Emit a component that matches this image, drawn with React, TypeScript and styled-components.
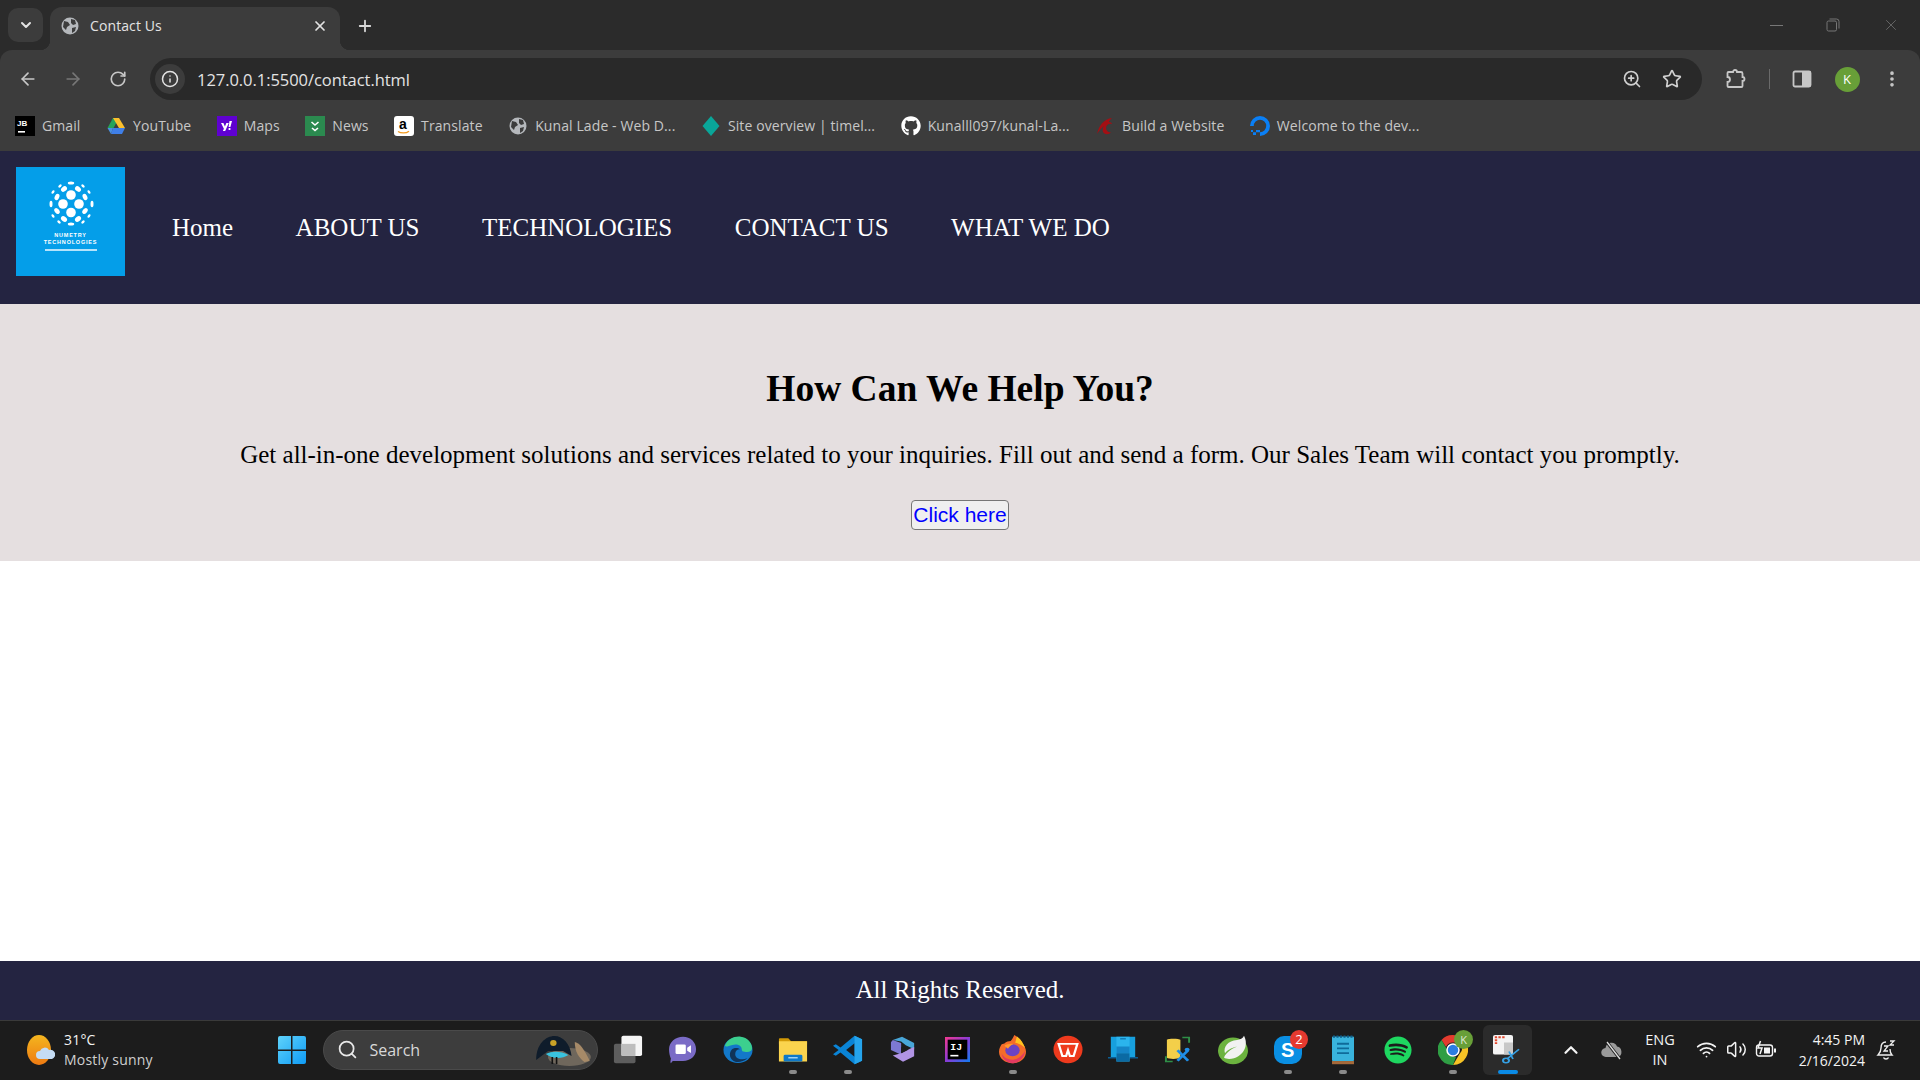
import React from 'react';
import styled, { createGlobalStyle } from 'styled-components';
import {
  ArrowLeft,
  ArrowRight,
  ChevronDown,
  ChevronUp,
  Info,
  MoreVertical,
  Plus,
  RotateCw,
  Search,
  Star,
  Volume2,
  Wifi,
  X,
  ZoomIn,
} from 'lucide-react';
import { FaGithub, FaSpotify } from 'react-icons/fa';

const GlobalStyle = createGlobalStyle`
  html, body {
    margin: 0;
    padding: 0;
    background: #fff;
  }
`;

const NAVY = '#242441';

const SkypeBadge = styled.span`
  position: absolute;
  top: 5px;
  right: 7px;
  width: 18px;
  height: 19px;
  display: flex;
  align-items: center;
  justify-content: center;
  border-radius: 50%;
  background: #e5392f;
  color: #fff;
  font-size: 13px;
`;

const ChromeBadge = styled.span`
  position: absolute;
  top: 5px;
  right: 7px;
  width: 19px;
  height: 19px;
  display: flex;
  align-items: center;
  justify-content: center;
  border-radius: 50%;
  background: #689f38;
  color: #dfe8d2;
  font-size: 11px;
`;

const GlobeFavicon = () => (
  <svg width="18" height="18" viewBox="0 0 18 18">
    <circle cx="9" cy="9" r="8.5" fill="#b5b8bc" />
    <path d="M3 4l4 1 2 3-3 2-1 3-3-3zM10 2l4 1 1 4-3 1-2-2zM11 11l4-1-1 4-3 2z" fill="#3c3c3c" />
  </svg>
);

const JbIcon = () => (
  <svg width="20" height="20" viewBox="0 0 20 20">
    <rect width="20" height="20" fill="#000" />
    <text x="2" y="10" fill="#fff" fontSize="8" fontWeight="700" fontFamily="Liberation Sans">JB</text>
    <rect x="3" y="15" width="7" height="1.6" fill="#fff" />
  </svg>
);

const DriveIcon = () => (
  <svg width="20" height="20" viewBox="0 0 20 20">
    <path d="M7 2h6l-5.5 10H1.5z" fill="#25a35a" />
    <path d="M7 2h6l6 10h-6z" fill="#fbc02d" />
    <path d="M7 12h12l-3 6H5z" fill="#3f7fe8" />
    <path d="M1.5 12H7l-2 6z" fill="#4a90e2" />
  </svg>
);

const YahooIcon = () => (
  <svg width="20" height="20" viewBox="0 0 20 20">
    <rect width="20" height="20" fill="#5f01d1" />
    <path d="M4 7h2.400l1.500 3.500L9.400 7h2.400l-3.600 8H5.900l1-2.300zM12.500 5h2.500l-1.600 6h-1.800zM11.600 12h1.800v2h-1.800z" fill="#fff" />
  </svg>
);

const NewsIcon = () => (
  <svg width="20" height="20" viewBox="0 0 20 20">
    <rect width="20" height="20" fill="#2b8a4f" />
    <path d="M6.500 6l3.500 3 3.500-3M7 12l3 2.500 3-2.500" stroke="#fff" strokeWidth="1.6" fill="none" />
  </svg>
);

const AmazonIcon = () => (
  <svg width="20" height="20" viewBox="0 0 20 20">
    <rect width="20" height="20" rx="3" fill="#fff" />
    <text x="5" y="13" fill="#000" fontSize="14" fontWeight="700" fontFamily="Liberation Sans">a</text>
    <path d="M4 15.500c3 2 8 2 11-.3" stroke="#f29a1f" strokeWidth="1.3" fill="none" />
  </svg>
);

const DiamondIcon = () => (
  <svg width="20" height="20" viewBox="0 0 20 20">
    <path d="M10 0l8.500 10L10 20 1.500 10z" fill="#0aa699" />
  </svg>
);

const RedBirdIcon = () => (
  <svg width="20" height="20" viewBox="0 0 20 20">
    <path d="M2 18C4 9 9 3 17 2c-2 2-3 3-3 4 2 0 3 1 3 2-3-1-6 1-6 4 0 3 3 5 5 4-2 3-6 3-8 0-1-2 0-5 1-6-3 2-5 5-7 8z" fill="#a30f14" />
  </svg>
);

const OceanIcon = () => (
  <svg width="20" height="20" viewBox="0 0 20 20">
    <path d="M10 20v-3.800a6.200 6.200 0 1 0-6.200-6.200H0A10 10 0 1 1 10 20z" fill="#0a7ff5" />
    <path d="M6 14h4v2.200H6zM3 16.200h3V19H3zM1 14h2v2H1z" fill="#0a7ff5" />
  </svg>
);

const LogoMark = () => (
  <svg width="56" height="56" viewBox="-28 -28 56 56">
    <g fill="#fff">
      <circle cx="0" cy="-9" r="4.8" />
      <circle cx="-8" cy="0" r="4.8" />
      <circle cx="8" cy="0" r="4.8" />
      <circle cx="0" cy="8.5" r="4.8" />
      <ellipse cx="-7" cy="-15" rx="2.4" ry="3.3" transform="rotate(50 -7 -15)" />
      <ellipse cx="7" cy="-15" rx="2.4" ry="3.3" transform="rotate(-50 7 -15)" />
      <ellipse cx="-14" cy="-7" rx="2.2" ry="3.3" transform="rotate(25 -14 -7)" />
      <ellipse cx="14" cy="-7" rx="2.2" ry="3.3" transform="rotate(-25 14 -7)" />
      <ellipse cx="-14" cy="7" rx="2.2" ry="3.3" transform="rotate(-40 -14 7)" />
      <ellipse cx="14" cy="7" rx="2.2" ry="3.3" transform="rotate(40 14 7)" />
      <ellipse cx="-7" cy="15" rx="2.4" ry="3.3" transform="rotate(-55 -7 15)" />
      <ellipse cx="7" cy="15" rx="2.4" ry="3.3" transform="rotate(55 7 15)" />
      <ellipse cx="0" cy="-21" rx="3.2" ry="1.5" />
      <ellipse cx="0" cy="20" rx="3.2" ry="1.5" />
      <ellipse cx="-20" cy="0" rx="1.5" ry="3.2" />
      <ellipse cx="21" cy="0" rx="1.5" ry="3.2" />
      <ellipse cx="-11" cy="-18" rx="2" ry="1.2" transform="rotate(-40 -11 -18)" />
      <ellipse cx="12" cy="-18" rx="2" ry="1.2" transform="rotate(40 12 -18)" />
      <ellipse cx="-18" cy="-12" rx="1.2" ry="2" transform="rotate(35 -18 -12)" />
      <ellipse cx="18" cy="-12" rx="1.2" ry="2" transform="rotate(-35 18 -12)" />
      <ellipse cx="-18" cy="12" rx="1.2" ry="2" transform="rotate(-35 -18 12)" />
      <ellipse cx="18" cy="12" rx="1.2" ry="2" transform="rotate(35 18 12)" />
      <ellipse cx="-12" cy="18" rx="2" ry="1.2" transform="rotate(40 -12 18)" />
      <ellipse cx="12" cy="18" rx="2" ry="1.2" transform="rotate(-40 12 18)" />
    </g>
  </svg>
);

const ExtensionsIcon = () => (
  <svg width="22" height="22" viewBox="0 0 22 22" fill="none" stroke="#c7c7c7" strokeWidth="1.8">
    <path d="M4.500 4H9a2 2 0 0 1 4 0h4a1.500 1.500 0 0 1 1.500 1.500V9a2 2 0 0 1 0 4v5a1 1 0 0 1-1 1h-13a1 1 0 0 1-1-1v-4a2.500 2.500 0 0 0 0-5V5a1 1 0 0 1 1-1z" />
  </svg>
);

const SidePanelIcon = () => (
  <svg width="20" height="20" viewBox="0 0 20 20">
    <rect x="1.5" y="2.5" width="17" height="15" rx="1.5" fill="none" stroke="#c7c7c7" strokeWidth="1.8" />
    <rect x="10" y="2.5" width="8.5" height="15" fill="#c7c7c7" />
  </svg>
);

const RestoreIcon = () => (
  <svg width="14" height="14" viewBox="0 0 14 14" fill="none" stroke="#777" strokeWidth="1">
    <rect x="1" y="3" width="9.5" height="10" rx="1.5" />
    <path d="M3.500 1h7A2.500 2.500 0 0 1 13 3.500v7" />
  </svg>
);

const WeatherIcon = () => (
  <svg width="28" height="30" viewBox="0 0 28 30">
    <defs>
      <linearGradient id="sun" x1="0" y1="0" x2="0" y2="1">
        <stop offset="0" stopColor="#f4b61f" />
        <stop offset="1" stopColor="#ee7a12" />
      </linearGradient>
    </defs>
    <ellipse cx="12" cy="15" rx="12" ry="15" fill="url(#sun)" />
    <path d="M13 24a4 4 0 0 1 0-8 5 5 0 0 1 9-1 4.500 4.500 0 0 1 3 9z" fill="#c5dcf4" />
  </svg>
);

const WindowsIcon = () => (
  <svg width="30" height="30" viewBox="0 0 30 30">
    <defs>
      <linearGradient id="win" x1="0" y1="0" x2="1" y2="1">
        <stop offset="0" stopColor="#5fd3fb" />
        <stop offset="1" stopColor="#0f9bf5" />
      </linearGradient>
    </defs>
    <path d="M1 3a2 2 0 0 1 2-2h11v13.500H1zM15.500 1H27a2 2 0 0 1 2 2v11.500H15.500zM1 16h13v13H3a2 2 0 0 1-2-2zM15.500 16H29v11a2 2 0 0 1-2 2H15.500z" fill="url(#win)" />
  </svg>
);

const SearchArt = () => (
  <svg width="60" height="32" viewBox="0 0 56 32" preserveAspectRatio="none">
    <ellipse cx="34" cy="23" rx="20" ry="9" fill="#6f675c" />
    <path d="M3 26C3 10 12 2 20 2s15 8 16 20l-8-5H14z" fill="#0f1c2b" />
    <path d="M12 20c6-3 14-3 21 1-6 4-15 4-21-1z" fill="#39c3df" />
    <circle cx="19" cy="9" r="3" fill="#c9a227" />
    <path d="M18 23v7M22 23v7" stroke="#111" strokeWidth="1.5" />
    <path d="M39 8c5 1 9 8 14 19l-5 1c-5-4-9-10-9-20z" fill="#a68a68" />
  </svg>
);

const TaskViewIcon = () => (
  <svg width="30" height="29" viewBox="0 0 32 36" preserveAspectRatio="none">
    <rect x="1" y="11" width="23" height="24" rx="2" fill="#5d5d5d" />
    <rect x="9" y="1" width="22" height="25" rx="2" fill="#f5f5f5" />
    <rect x="9" y="11" width="15" height="15" fill="#bdbdbd" />
  </svg>
);

const TeamsIcon = () => (
  <svg width="28" height="28" viewBox="0 0 30 36" preserveAspectRatio="none">
    <path d="M15 1c8 0 14 7 14 16s-6 15-14 15H4l-2 3c-1-1 0-4 0-6-1-3-2-7-2-12C0 8 7 1 15 1z" fill="#7a6bc6" />
    <rect x="7" y="11" width="11" height="12" rx="1.5" fill="#fff" />
    <path d="M19.500 15l4-3v10l-4-3z" fill="#fff" />
  </svg>
);

const EdgeIcon = () => (
  <svg width="30" height="30" viewBox="0 0 32 36" preserveAspectRatio="none">
    <circle cx="16" cy="18" r="15.5" fill="#1378c9" />
    <path d="M2 13C5 4 13 1 19 2c7 1 12 7 12 14 0 4-4 5-8 4-2 0-3-1-3-3 0-4-5-7-10-5-4 1-7 3-8 1z" fill="#3ccf8e" />
    <path d="M13 32c-6-2-7-10-4-14 2-3 7-3 9-1-3 0-5 2-5 6 0 5 6 8 13 5-4 4-9 5-13 4z" fill="#101d33" opacity=".75" />
  </svg>
);

const FolderIcon = () => (
  <svg width="30" height="27" viewBox="0 0 32 36" preserveAspectRatio="none">
    <path d="M1 4a1 1 0 0 1 1-1h9l3 4h17v4H1z" fill="#d39a06" />
    <rect x="1" y="7" width="30" height="27" fill="#fbd44e" />
    <rect x="6" y="25" width="20" height="9" rx="1.5" fill="#0f79c9" />
    <rect x="11" y="28" width="10" height="2" fill="#9ed2f4" />
  </svg>
);

const VsCodeIcon = () => (
  <svg width="30" height="30" viewBox="0 0 32 36" preserveAspectRatio="none">
    <path d="M23 1l8 4v26l-8 4L8 21l-5 4-3-2 6-5-6-5 3-2 5 4z" fill="#0a84d6" />
    <path d="M23 10v16l-9-8z" fill="#1c1c1c" />
    <path d="M23 1l8 4v26l-8 4z" fill="#25a4ec" />
  </svg>
);

const CopilotIcon = () => (
  <svg width="26" height="28" viewBox="0 0 28 36" preserveAspectRatio="none">
    <path d="M3 5l10-4 13 8v8l-9-5-5-5z" fill="#48a6d8" />
    <path d="M3 5l9 4v15L1 18V8z" fill="#7d79d2" />
    <path d="M26 14v12l-12 7-11-8 10-3 9-6z" fill="#b194e4" />
    <path d="M12 14l7 4-7 4z" fill="#1c1c1c" />
  </svg>
);

const IntellijIcon = () => (
  <svg width="25" height="25" viewBox="0 0 28 28">
    <defs>
      <linearGradient id="ij" x1="0" y1="0" x2="1" y2="1">
        <stop offset="0" stopColor="#f5398f" />
        <stop offset=".5" stopColor="#8a3bd6" />
        <stop offset="1" stopColor="#0e7cf2" />
      </linearGradient>
    </defs>
    <rect width="28" height="28" fill="url(#ij)" />
    <rect x="3" y="3" width="22" height="22" fill="#000" />
    <text x="6" y="15" fill="#fff" fontSize="11" fontWeight="700" fontFamily="Liberation Mono">IJ</text>
    <rect x="6" y="20" width="9" height="1.8" fill="#fff" />
  </svg>
);

const FirefoxIcon = () => (
  <svg width="27" height="29" viewBox="0 0 30 38" preserveAspectRatio="none">
    <path d="M17 0c6 4 8 8 8 10 3 3 5 7 5 12 0 9-7 15-15 15S0 31 0 22c0-5 2-8 3-10l3-1c2-2 5-3 7-3 2-3 3-5 4-8z" fill="#f46c2a" />
    <path d="M20 2c5 4 7 9 9 15-3-3-7-6-11-7 1-3 1-6 2-8z" fill="#ffc21f" />
    <path d="M3 24c2 8 17 15 26-3-1 10-8 16-14 16S3 31 3 24z" fill="#e23a62" />
    <circle cx="15" cy="20" r="8" fill="#6b43c4" />
    <path d="M6 14c3-2 7-3 10-2-3 1-5 4-6 6z" fill="#ff9a2c" />
  </svg>
);

const WpsIcon = () => (
  <svg width="30" height="29" viewBox="0 0 32 36" preserveAspectRatio="none">
    <ellipse cx="16" cy="18" rx="15.5" ry="17" fill="#ee3a1d" />
    <path d="M6 11h20l-4 15h-4l-2-7-2 7h-4z" fill="none" stroke="#fff" strokeWidth="2.4" />
  </svg>
);

const PhoneLinkIcon = () => (
  <svg width="30" height="27" viewBox="0 0 32 36" preserveAspectRatio="none">
    <rect x="3" y="1" width="26" height="27" fill="#17a0de" />
    <path d="M0 28h32v2H0z" fill="#0b5e94" />
    <rect x="9" y="1" width="14" height="33" fill="#2bb4ed" />
    <rect x="9" y="14" width="14" height="9" fill="#1585c7" />
    <rect x="9" y="23" width="14" height="11" fill="#0b6aa3" />
    <rect x="13" y="3" width="6" height="1.5" fill="#0b6aa3" />
  </svg>
);

const DbToolIcon = () => (
  <svg width="27" height="27" viewBox="0 0 28 36" preserveAspectRatio="none">
    <path d="M3 5c0-2 13-2 14 0v24c-3 2-12 2-14 0z" fill="#f3cf4a" />
    <path d="M19 2h7v7M2 27v7h7" fill="none" stroke="#2f8f47" strokeWidth="2" />
    <path d="M14 19l11 14M25 19L14 33" stroke="#1f8ee6" strokeWidth="3" />
    <circle cx="24" cy="18" r="2.5" fill="#1f8ee6" />
  </svg>
);

const SpringIcon = () => (
  <svg width="30" height="30" viewBox="0 0 30 36" preserveAspectRatio="none">
    <ellipse cx="15" cy="19" rx="15" ry="16" fill="#6cb33f" />
    <path d="M26 1c4 9 2 22-10 27-4 1-8 1-10-1 2-6 9-12 16-14-7 2-12 4-15 9-2-8 3-15 12-16 3 0 6-2 7-5z" fill="#f2f2f2" />
  </svg>
);

const SkypeIcon = () => (
  <svg width="28" height="28" viewBox="0 0 28 28">
    <rect width="28" height="28" rx="10" fill="#0a8fe3" />
    <text x="7" y="21" fill="#fff" fontSize="20" fontWeight="700" fontFamily="Liberation Sans">S</text>
  </svg>
);

const NotepadIcon = () => (
  <svg width="22" height="30" viewBox="0 0 22 38" preserveAspectRatio="none">
    <rect y="2" width="22" height="31" rx="1" fill="#39b3dc" />
    <rect y="33" width="22" height="4" fill="#a56a3b" />
    <path d="M1 2h20" stroke="#0f5f8a" strokeWidth="3" strokeDasharray="2 1.5" />
    <path d="M5 11h12M5 17h12M5 23h12" stroke="#0f6b99" strokeWidth="2.4" />
  </svg>
);

const SpotifyIcon = () => <FaSpotify size={28} color="#1ed760" />;

const ChromeIcon = () => (
  <svg width="30" height="30" viewBox="0 0 30 30">
    <path d="M15 0a15 15 0 0 1 13 7.500H15a7.500 7.500 0 0 0-7 4.500L3.500 5A15 15 0 0 1 15 0z" fill="#e33b2e" />
    <path d="M28 7.500A15 15 0 0 1 15 30l6.500-11a7.500 7.500 0 0 0 0-11.500z" fill="#f7c325" />
    <path d="M15 30A15 15 0 0 1 3.500 5L10 16a7.500 7.500 0 0 0 8 6z" fill="#2f9e44" />
    <circle cx="15" cy="15" r="6" fill="#2a7de1" stroke="#fff" strokeWidth="1.5" />
  </svg>
);

const SnipIcon = () => (
  <svg width="30" height="30" viewBox="0 0 30 40" preserveAspectRatio="none">
    <rect y="0" width="20" height="26" rx="2" fill="#f4f4f4" />
    <rect x="11" y="10" width="9" height="16" fill="#c8c8c8" />
    <path d="M3 12V3h9" fill="none" stroke="#e2492f" strokeWidth="2.4" strokeDasharray="2.4 1.4" />
    <path d="M26 19L14 32M16 22l4 10" stroke="#35a0e4" strokeWidth="1.8" fill="none" />
    <circle cx="13" cy="34" r="3" fill="none" stroke="#35a0e4" strokeWidth="2" />
  </svg>
);

const MutedCloudIcon = () => (
  <svg width="22" height="20" viewBox="0 0 22 20">
    <path d="M5 17a4.500 4.500 0 0 1-.5-9 6 6 0 0 1 11.500-1.500A5.500 5.500 0 0 1 17 17z" fill="#9a9a9a" />
    <path d="M5 1l14 18" stroke="#1c1c1c" strokeWidth="3" />
    <path d="M6 2l13 17" stroke="#ddd" strokeWidth="1.3" />
  </svg>
);

const BatteryIcon = () => (
  <svg width="22" height="20" viewBox="0 0 22 20" fill="none" stroke="#f3f3f3" strokeWidth="1.4">
    <rect x="1.5" y="5" width="16" height="11" rx="2.5" />
    <path d="M20 8.500v4" strokeWidth="2" />
    <rect x="9" y="7.5" width="6" height="6" fill="#f3f3f3" stroke="none" />
    <path d="M5.500 1L3 8h4l-2 6" strokeWidth="1.5" />
  </svg>
);

const BellIcon = () => (
  <svg width="20" height="22" viewBox="0 0 20 22" fill="none" stroke="#eee" strokeWidth="1.4">
    <path d="M10 3C6 3 5 6 5 9c0 4-2 6-3 7h14c-1-1-2-3-2-6" />
    <path d="M7.500 18.500c1 2 4 2 5 0" />
    <path d="M8 7h4l-4 5h4M14 2h4l-4 4h4" strokeWidth="1.3" />
  </svg>
);

const bookmarks: { icon: React.ReactNode; label: string }[] = [
  { icon: <JbIcon />, label: 'Gmail' },
  { icon: <DriveIcon />, label: 'YouTube' },
  { icon: <YahooIcon />, label: 'Maps' },
  { icon: <NewsIcon />, label: 'News' },
  { icon: <AmazonIcon />, label: 'Translate' },
  { icon: <GlobeFavicon />, label: 'Kunal Lade - Web D...' },
  { icon: <DiamondIcon />, label: 'Site overview | timel...' },
  { icon: <FaGithub size={20} color="#fff" />, label: 'Kunalll097/kunal-La...' },
  { icon: <RedBirdIcon />, label: 'Build a Website' },
  { icon: <OceanIcon />, label: 'Welcome to the dev...' },
];

const navLinks = ['Home', 'ABOUT US', 'TECHNOLOGIES', 'CONTACT US', 'WHAT WE DO'];

const taskbarApps: { icon: React.ReactNode; dot?: boolean; active?: boolean; badge?: React.ReactNode }[] = [
  { icon: <TaskViewIcon /> },
  { icon: <TeamsIcon /> },
  { icon: <EdgeIcon /> },
  { icon: <FolderIcon />, dot: true },
  { icon: <VsCodeIcon />, dot: true },
  { icon: <CopilotIcon /> },
  { icon: <IntellijIcon /> },
  { icon: <FirefoxIcon />, dot: true },
  { icon: <WpsIcon /> },
  { icon: <PhoneLinkIcon /> },
  { icon: <DbToolIcon /> },
  { icon: <SpringIcon /> },
  { icon: <SkypeIcon />, dot: true, badge: <SkypeBadge>2</SkypeBadge> },
  { icon: <NotepadIcon />, dot: true },
  { icon: <SpotifyIcon /> },
  { icon: <ChromeIcon />, dot: true, badge: <ChromeBadge>K</ChromeBadge> },
  { icon: <SnipIcon />, active: true },
];

export default function App() {
  return (
    <Page>
      <GlobalStyle />
      <BrowserChrome>
        <TabStrip>
          <TabSearch>
            <ChevronDown size={16} strokeWidth={3} color="#e3e3e3" />
          </TabSearch>
          <Tab>
            <GlobeFavicon />
            <TabTitle>Contact Us</TabTitle>
            <X size={16} strokeWidth={2.6} color="#e3e3e3" />
          </Tab>
          <NewTab>
            <Plus size={18} strokeWidth={2.4} color="#d8d8d8" />
          </NewTab>
          <WindowControls>
            <Minimize />
            <RestoreIcon />
            <X size={18} strokeWidth={1} color="#777" />
          </WindowControls>
        </TabStrip>

        <Toolbar>
          <ToolButton>
            <ArrowLeft size={20} strokeWidth={2} color="#c7c7c7" />
          </ToolButton>
          <ToolButton>
            <ArrowRight size={20} strokeWidth={2} color="#777" />
          </ToolButton>
          <ToolButton>
            <RotateCw size={18} strokeWidth={2.2} color="#c7c7c7" />
          </ToolButton>
          <Omnibox>
            <SiteInfo>
              <Info size={18} strokeWidth={2} color="#e3e3e3" />
            </SiteInfo>
            <Url>127.0.0.1:5500/contact.html</Url>
            <OmniAction>
              <ZoomIn size={20} strokeWidth={2} color="#d0d0d0" />
            </OmniAction>
            <OmniAction>
              <Star size={20} strokeWidth={2} color="#d0d0d0" />
            </OmniAction>
          </Omnibox>
          <ToolbarEnd>
            <ExtensionsIcon />
            <ToolDivider />
            <SidePanelIcon />
            <Avatar>K</Avatar>
            <MoreVertical size={20} strokeWidth={2.4} color="#c7c7c7" />
          </ToolbarEnd>
        </Toolbar>

        <BookmarksBar>
          {bookmarks.map(item => (
            <Bookmark key={item.label}>
              <BookmarkIcon>{item.icon}</BookmarkIcon>
              {item.label}
            </Bookmark>
          ))}
        </BookmarksBar>
      </BrowserChrome>

      <SiteHeader>
        <Logo>
          <LogoMark />
          <LogoName>NUMETRY</LogoName>
          <LogoName>TECHNOLOGIES</LogoName>
          <LogoRule />
        </Logo>
        <Nav>
          {navLinks.map(link => (
            <NavLink key={link}>{link}</NavLink>
          ))}
        </Nav>
      </SiteHeader>

      <Hero>
        <HeroTitle>How Can We Help You?</HeroTitle>
        <HeroText>
          Get all-in-one development solutions and services related to your inquiries. Fill out and
          send a form. Our Sales Team will contact you promptly.
        </HeroText>
        <HeroButton type="button">Click here</HeroButton>
      </Hero>

      <Content />

      <Footer>All Rights Reserved.</Footer>

      <Taskbar>
        <Weather>
          <WeatherIcon />
          <WeatherText>
            <span>31°C</span>
            <WeatherNote>Mostly sunny</WeatherNote>
          </WeatherText>
        </Weather>
        <StartSlot>
          <WindowsIcon />
        </StartSlot>
        <SearchPill>
          <Search size={21} strokeWidth={2} color="#e8e8e8" />
          <SearchLabel>Search</SearchLabel>
          <SearchArt />
        </SearchPill>
        <AppList>
          {taskbarApps.map((app, index) => (
            <AppSlot key={index} $active={app.active}>
              {app.icon}
              {app.badge}
              {app.dot && <RunningDot />}
              {app.active && <ActiveBar />}
            </AppSlot>
          ))}
        </AppList>
        <Tray>
          <TrayIcon>
            <ChevronUp size={22} strokeWidth={2.4} color="#f3f3f3" />
          </TrayIcon>
          <CloudSlot>
            <MutedCloudIcon />
          </CloudSlot>
          <Language>
            <span>ENG</span>
            <span>IN</span>
          </Language>
          <TrayIcon>
            <Wifi size={21} strokeWidth={2} color="#f3f3f3" />
          </TrayIcon>
          <TrayIcon>
            <Volume2 size={21} strokeWidth={1.7} color="#f3f3f3" />
          </TrayIcon>
          <TrayIcon>
            <BatteryIcon />
          </TrayIcon>
          <Clock>
            <span>4:45 PM</span>
            <span>2/16/2024</span>
          </Clock>
          <BellIcon />
        </Tray>
      </Taskbar>
    </Page>
  );
}

const Page = styled.div`
  width: 100%;
  height: 100vh;
  display: flex;
  flex-direction: column;
  overflow: hidden;
  font-family: 'Liberation Serif', serif;
`;

const BrowserChrome = styled.div`
  flex: none;
  background: #2b2b2b;
`;

const TabStrip = styled.div`
  height: 50px;
  display: flex;
  align-items: flex-end;
  padding-left: 8px;
  font-family: 'Open Sans', sans-serif;
`;

const TabSearch = styled.div`
  width: 35px;
  height: 34px;
  margin-bottom: 8px;
  display: flex;
  align-items: center;
  justify-content: center;
  border-radius: 10px;
  background: #3c3c3c;
`;

const Tab = styled.div`
  position: relative;
  width: 290px;
  height: 43px;
  margin-left: 7px;
  padding: 0 12px 6px 11px;
  box-sizing: border-box;
  display: flex;
  align-items: center;
  border-radius: 12px 12px 0 0;
  background: #3c3c3c;

  &::before,
  &::after {
    content: '';
    position: absolute;
    bottom: 0;
    width: 10px;
    height: 10px;
  }

  &::before {
    left: -10px;
    background: radial-gradient(circle at 0 0, transparent 10px, #3c3c3c 10.5px);
  }

  &::after {
    right: -10px;
    background: radial-gradient(circle at 100% 0, transparent 10px, #3c3c3c 10.5px);
  }
`;

const TabTitle = styled.span`
  flex: 1;
  margin-left: 11px;
  color: #e3e3e3;
  font-size: 14px;
  letter-spacing: 0.1px;
`;

const NewTab = styled.div`
  width: 30px;
  height: 43px;
  margin-left: 10px;
  padding-bottom: 6px;
  box-sizing: border-box;
  display: flex;
  align-items: center;
  justify-content: center;
`;

const WindowControls = styled.div`
  height: 50px;
  margin-left: auto;
  width: 130px;
  margin-right: 20px;
  display: flex;
  align-items: center;
  justify-content: space-between;
`;

const Minimize = styled.span`
  width: 13px;
  height: 1px;
  background: #777;
`;

const Toolbar = styled.div`
  height: 50px;
  display: flex;
  align-items: flex-end;
  padding-left: 5px;
  border-radius: 12px 12px 0 0;
  background: #3c3c3c;
`;

const ToolButton = styled.div`
  width: 45px;
  height: 42px;
  display: flex;
  align-items: center;
  justify-content: center;
`;

const Omnibox = styled.div`
  width: 1552px;
  height: 42px;
  margin-left: 10px;
  padding-left: 5px;
  padding-right: 10px;
  box-sizing: border-box;
  display: flex;
  align-items: center;
  border-radius: 21px;
  background: #292929;
`;

const SiteInfo = styled.div`
  width: 30px;
  height: 30px;
  display: flex;
  align-items: center;
  justify-content: center;
  border-radius: 50%;
  background: #3c3c3c;
`;

const Url = styled.span`
  flex: 1;
  margin-left: 12px;
  padding-top: 1px;
  color: #e3e3e3;
  font-family: 'Open Sans', sans-serif;
  font-size: 16.5px;
  letter-spacing: -0.05px;
`;

const OmniAction = styled.div`
  width: 40px;
  display: flex;
  justify-content: center;
`;

const ToolbarEnd = styled.div`
  height: 42px;
  flex: 1;
  padding: 0 18px 0 22px;
  display: flex;
  align-items: center;
  justify-content: space-between;
`;

const ToolDivider = styled.span`
  width: 1px;
  height: 20px;
  background: #6a6a6a;
`;

const Avatar = styled.div`
  width: 25px;
  height: 25px;
  display: flex;
  align-items: center;
  justify-content: center;
  border-radius: 50%;
  background: #689f38;
  color: #fff;
  font-family: 'Open Sans', sans-serif;
  font-size: 13px;
`;

const BookmarksBar = styled.div`
  height: 51px;
  display: flex;
  align-items: center;
  gap: 25.5px;
  padding-left: 15px;
  background: #3c3c3c;
`;

const Bookmark = styled.div`
  display: flex;
  align-items: center;
  gap: 7px;
  color: #c7c7c7;
  font-family: 'Open Sans', sans-serif;
  font-size: 14px;
  letter-spacing: 0.1px;
  white-space: nowrap;
`;

const BookmarkIcon = styled.span`
  width: 20px;
  height: 20px;
  display: flex;
  align-items: center;
  justify-content: center;
`;

const SiteHeader = styled.header`
  height: 153px;
  flex: none;
  padding: 16px 0 0 16px;
  box-sizing: border-box;
  display: flex;
  align-items: flex-start;
  background: ${NAVY};
`;

const Logo = styled.div`
  width: 109px;
  height: 109px;
  padding-top: 9px;
  box-sizing: border-box;
  display: flex;
  flex-direction: column;
  align-items: center;
  background: #049ee9;
`;

const LogoName = styled.span`
  color: #fff;
  font-family: 'Liberation Sans', sans-serif;
  font-size: 5.5px;
  font-weight: 700;
  line-height: 7px;
  letter-spacing: 0.8px;
  &:first-of-type {
    margin-top: 0;
  }
`;

const LogoRule = styled.span`
  width: 52px;
  height: 1.5px;
  margin-top: 3px;
  background: #b5e3fb;
`;

const Nav = styled.nav`
  display: flex;
  gap: 62.5px;
  margin: 46px 0 0 47px;
`;

const NavLink = styled.a`
  color: #fff;
  font-size: 25px;
  line-height: 30px;
`;

const Hero = styled.section`
  height: 257px;
  flex: none;
  padding-top: 63px;
  box-sizing: border-box;
  display: flex;
  flex-direction: column;
  align-items: center;
  background: #e5dfe0;
  color: #000;
`;

const HeroTitle = styled.h1`
  margin: 0;
  font-size: 37.5px;
  line-height: 44px;
`;

const HeroText = styled.p`
  margin: 29px 0 0;
  font-size: 25px;
  line-height: 30px;
`;

const HeroButton = styled.button`
  width: 98px;
  height: 30px;
  margin-top: 30px;
  padding: 0;
  border: 1.5px solid #767676;
  border-radius: 4px;
  background: #efefef;
  color: #0000ff;
  font-family: 'Liberation Sans', sans-serif;
  font-size: 21px;
`;

const Content = styled.main`
  flex: 1;
  background: #fff;
`;

const Footer = styled.footer`
  height: 59px;
  flex: none;
  display: flex;
  align-items: center;
  justify-content: center;
  padding-bottom: 1px;
  box-sizing: border-box;
  background: ${NAVY};
  color: #fff;
  font-size: 25px;
`;

const Taskbar = styled.div`
  height: 60px;
  flex: none;
  padding-bottom: 2px;
  display: flex;
  align-items: center;
  border-top: 1px solid #3a3a3a;
  box-sizing: border-box;
  background: #1c1c1c;
  color: #f3f3f3;
  font-family: 'Open Sans', sans-serif;
`;

const Weather = styled.div`
  width: 265px;
  padding-left: 27px;
  box-sizing: border-box;
  display: flex;
  align-items: center;
  gap: 9px;
`;

const WeatherText = styled.div`
  display: flex;
  flex-direction: column;
  font-size: 14px;
  line-height: 20px;
  letter-spacing: 0.2px;
`;

const WeatherNote = styled.span`
  color: #cfcfcf;
`;

const StartSlot = styled.div`
  width: 55px;
  display: flex;
  justify-content: center;
`;

const SearchPill = styled.div`
  width: 275px;
  height: 40px;
  margin: 0 2px 0 4px;
  padding: 0 4px 0 13px;
  box-sizing: border-box;
  display: flex;
  align-items: center;
  border: 1px solid #4a4a4a;
  border-radius: 20px;
  background: #3d3d3d;
`;

const SearchLabel = styled.span`
  flex: 1;
  margin-left: 11px;
  color: #d8d8d8;
  font-size: 16px;
`;

const AppList = styled.div`
  display: flex;
`;

const AppSlot = styled.div<{ $active?: boolean }>`
  position: relative;
  width: ${({ $active }) => ($active ? '49px' : '55px')};
  height: 50px;
  margin: ${({ $active }) => ($active ? '0 3px' : '0')};
  display: flex;
  align-items: center;
  justify-content: center;
  border-radius: 6px;
  background: ${({ $active }) => ($active ? '#2b2b2b' : 'transparent')};
`;

const RunningDot = styled.span`
  position: absolute;
  left: 50%;
  bottom: 1px;
  width: 8px;
  height: 4px;
  margin-left: -4px;
  border-radius: 2px;
  background: #8b8b8b;
`;

const ActiveBar = styled.span`
  position: absolute;
  left: 50%;
  bottom: 1px;
  width: 20px;
  height: 4px;
  margin-left: -10px;
  border-radius: 2px;
  background: #0a8be6;
`;

const Tray = styled.div`
  flex: 1;
  display: flex;
  align-items: center;
  padding-left: 21px;
  padding-right: 24px;
`;

const TrayIcon = styled.div`
  width: 30px;
  display: flex;
  justify-content: center;
`;

const CloudSlot = styled(TrayIcon)`
  margin-left: 11px;
`;

const Language = styled.div`
  width: 40px;
  margin: 0 11px 0 13px;
  display: flex;
  flex-direction: column;
  align-items: center;
  font-size: 14.5px;
  line-height: 20px;
`;

const Clock = styled.div`
  width: 84px;
  margin-right: 11px;
  display: flex;
  flex-direction: column;
  align-items: flex-end;
  font-size: 14px;
  line-height: 21px;
`;
